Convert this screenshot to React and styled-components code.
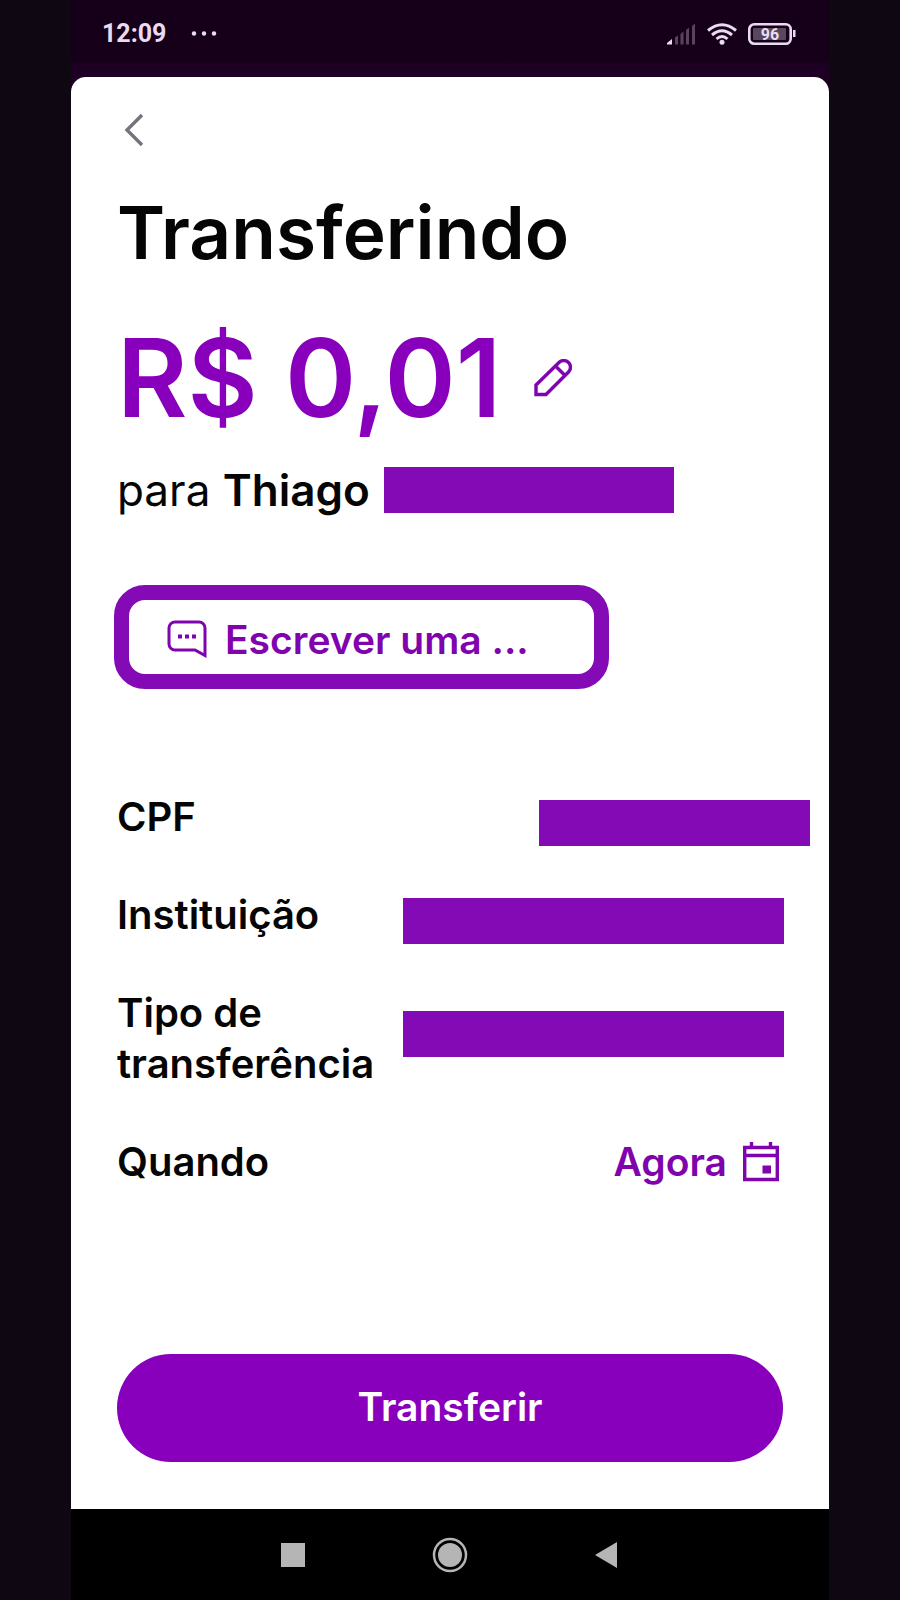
import React from 'react'
import styled, { createGlobalStyle } from 'styled-components'

const GlobalStyle = createGlobalStyle`
  * {
    box-sizing: border-box;
  }
  body {
    margin: 0;
    background: #0f0712;
    font-family: Inter, "Liberation Sans", sans-serif;
  }
  button {
    font-family: inherit;
    cursor: pointer;
  }
`
const Phone = styled.div`
  max-width: 758px;
  min-height: 100vh;
  margin: 0 auto;
  display: flex;
  flex-direction: column;
  background: linear-gradient(#160019 60px, #1e0024 66px);
`
const StatusBar = styled.header`
  height: 77px;
  padding: 0 33px 10px 31px;
  display: flex;
  align-items: center;
  justify-content: space-between;
  color: #eadcf0;
`
const StatusGroup = styled.div`
  display: flex;
  align-items: center;
  gap: ${({ $gap }) => $gap}px;
`
const Clock = styled.time`
  font-family: Roboto, sans-serif;
  font-size: 25px;
  font-weight: 700;
`
const Card = styled.main`
  flex: 1;
  display: flex;
  flex-direction: column;
  align-items: flex-start;
  padding: 32px 46px 47px;
  border-radius: 15px 15px 0 0;
  background: #fff;
  color: #050505;
`
const IconButton = styled.button`
  display: flex;
  padding: 4px;
  border: none;
  background: transparent;
`
const BackButton = styled(IconButton)`
  padding: 4px 7px;
`
const Title = styled.h1`
  margin: 37px 0 0;
  font-size: 73px;
  font-weight: 600;
  line-height: 90px;
`
const AmountRow = styled.div`
  margin-top: 40px;
  display: flex;
  align-items: center;
  gap: 28px;
`
const Amount = styled.span`
  font-size: 108px;
  font-weight: 600;
  line-height: 120px;
  color: #8800bb;
`
const Recipient = styled.div`
  margin-top: 25px;
  display: flex;
  align-items: center;
  gap: 14px;
  font-size: 44px;
  line-height: 54px;
`
const Name = styled.strong`
  font-weight: 600;
`
const Redacted = styled.span`
  display: block;
  width: ${({ $width }) => $width}px;
  height: 46px;
  background: #830ab4;
`
const MessageButton = styled.button`
  width: 495px;
  height: 104px;
  margin: 68px 0 0 -3px;
  padding: 4px 38px 0;
  display: flex;
  align-items: center;
  gap: 18px;
  border: 15px solid #830ab4;
  border-radius: 31px;
  background: #fff;
  color: #8004ae;
  font-size: 39px;
  font-weight: 600;
`
const Details = styled.dl`
  width: 100%;
  margin: 102px 0 0;
  display: flex;
  flex-direction: column;
  gap: 43px;
  font-size: 40px;
  font-weight: 600;
  line-height: 51px;
`
const DetailRow = styled.div`
  display: grid;
  grid-template-columns: 262px 1fr;
  column-gap: 24px;
`
const Label = styled.dt`
  padding-bottom: 4px;
`
const Value = styled.dd`
  margin: 0 ${({ $bleed }) => ($bleed ? '-27px' : '0')} 0 0;
  padding-top: ${({ $tall }) => ($tall ? 24 : 9)}px;
  display: flex;
  justify-content: flex-end;
`
const When = styled.dd`
  margin: 0;
  display: flex;
  align-items: flex-start;
  justify-content: flex-end;
`
const DateButton = styled.button`
  padding: 0 4px 0 0;
  display: flex;
  align-items: center;
  gap: 16px;
  border: none;
  background: transparent;
  color: #8004ae;
  font-size: 39px;
  font-weight: 600;
  line-height: 51px;
`
const TransferButton = styled.button`
  width: 100%;
  height: 108px;
  margin-top: auto;
  padding: 0 0 4px;
  border: none;
  border-radius: 54px;
  background: #8800bb;
  color: #fff;
  font-size: 39px;
  font-weight: 600;
`
const NavBar = styled.nav`
  height: 91px;
  padding: 0 206px;
  display: flex;
  align-items: center;
  justify-content: space-between;
  background: #000;
`

const SignalIcon = () => (
  <svg width="29" height="22" viewBox="0 0 29 22" aria-hidden="true">
    <path d="M0 21.500V20L5 16v5.500z" fill="#eadcf0" />
    <g fill="#59435f">
      <path d="M8 14.500l3-2v9H8zM13.500 11l3-2.500v13h-3zM19 7l3-2.500v17h-3zM25 3l3-2.500v21h-3z" />
    </g>
  </svg>
)

const WifiIcon = () => (
  <svg width="30" height="22" viewBox="0 0 30 22" fill="none" stroke="#eadcf0" strokeWidth="3" aria-hidden="true">
    <path d="M1 7.500Q15-4 29 7.500M5 12Q15 3.500 25 12M9.500 16Q15 11 20.500 16" />
    <circle cx="15" cy="19.300" r="2.500" fill="#eadcf0" stroke="none" />
  </svg>
)

const BatteryIcon = () => (
  <svg width="48" height="22" viewBox="0 0 48 22" aria-label="96">
    <rect x="1.300" y="1.300" width="41.400" height="19.400" rx="5" fill="none" stroke="#eadcf0" strokeWidth="2.600" />
    <rect x="5" y="5" width="33" height="12" rx="1" fill="#58475f" />
    <rect x="45" y="7" width="2.500" height="7" fill="#eadcf0" />
    <text x="22" y="17" textAnchor="middle" fontFamily="Roboto, sans-serif" fontSize="16" fontWeight="700" fill="#eadcf0">96</text>
  </svg>
)

const DotsIcon = () => (
  <svg width="26" height="6" viewBox="0 0 26 6" fill="#eadcf0" aria-hidden="true">
    <circle cx="3" cy="2.500" r="2.200" />
    <circle cx="13" cy="2.500" r="2.200" />
    <circle cx="23" cy="2.500" r="2.200" />
  </svg>
)

const BackIcon = () => (
  <svg width="20" height="34" viewBox="0 0 20 34" fill="none" stroke="#74747c" strokeWidth="3.400" aria-hidden="true">
    <path d="M18 2 3 17l15 15" />
  </svg>
)

const PencilIcon = () => (
  <svg width="38" height="38" viewBox="0 0 38 38" fill="none" stroke="#8004ae" strokeWidth="3.400" aria-hidden="true">
    <path d="M2 26 25 3.500a6.700 6.700 0 0 1 9.500 9.500L12 35.500H2z" />
    <path d="m22 7.500 8.500 8.500" />
  </svg>
)

const MessageIcon = () => (
  <svg width="40" height="38" viewBox="0 0 40 38" fill="none" stroke="#8004ae" strokeWidth="3" aria-hidden="true">
    <path d="M38 35.500V8a6 6 0 0 0-6-6H8a6 6 0 0 0-6 6v16a6 6 0 0 0 6 6h20z" />
    <path d="M11 16.500h4M18 16.500h4M25 16.500h4" strokeWidth="4" />
  </svg>
)

const CalendarIcon = () => (
  <svg width="36" height="40" viewBox="0 0 36 40" fill="none" stroke="#8004ae" strokeWidth="3.400" aria-hidden="true">
    <path d="M1.700 5.500h32.600v32H1.700zM1.700 13.500h32.600" />
    <path d="M8.500 0v5M27.500 0v5" />
    <path d="M19.500 23.500H28v8h-8.500z" fill="#8004ae" stroke="none" />
  </svg>
)

const rows = [
  { label: 'CPF', width: 271, bleed: true },
  { label: 'Instituição', width: 381 },
  { label: 'Tipo de transferência', width: 381, tall: true },
]

const App = () => {
  return (
    <>
      <GlobalStyle />
      <Phone>
        <StatusBar>
          <StatusGroup $gap={25}>
            <Clock>12:09</Clock>
            <DotsIcon />
          </StatusGroup>
          <StatusGroup $gap={11}>
            <SignalIcon />
            <WifiIcon />
            <BatteryIcon />
          </StatusGroup>
        </StatusBar>
        <Card>
          <BackButton aria-label="Voltar"><BackIcon /></BackButton>
          <Title>Transferindo</Title>
          <AmountRow>
            <Amount>R$ 0,01</Amount>
            <IconButton aria-label="Editar valor"><PencilIcon /></IconButton>
          </AmountRow>
          <Recipient>
            <span>para <Name>Thiago</Name></span>
            <Redacted $width={290} />
          </Recipient>
          <MessageButton>
            <MessageIcon />
            Escrever uma ...
          </MessageButton>
          <Details>
            {rows.map((row) => (
              <DetailRow key={row.label}>
                <Label>{row.label}</Label>
                <Value $bleed={row.bleed} $tall={row.tall}>
                  <Redacted $width={row.width} />
                </Value>
              </DetailRow>
            ))}
            <DetailRow>
              <Label>Quando</Label>
              <When>
                <DateButton>
                  Agora
                  <CalendarIcon />
                </DateButton>
              </When>
            </DetailRow>
          </Details>
          <TransferButton>Transferir</TransferButton>
        </Card>
        <NavBar>
          <IconButton aria-label="Recentes">
            <svg width="24" height="24" aria-hidden="true"><rect width="24" height="24" fill="#b5b5b5" /></svg>
          </IconButton>
          <IconButton aria-label="Início">
            <svg width="36" height="36" viewBox="0 0 36 36" aria-hidden="true">
              <circle cx="18" cy="18" r="16" fill="none" stroke="#b5b5b5" strokeWidth="2.500" />
              <circle cx="18" cy="18" r="12" fill="#b5b5b5" />
            </svg>
          </IconButton>
          <IconButton aria-label="Voltar ao anterior">
            <svg width="24" height="26" aria-hidden="true"><path d="M22 0v26L0 13z" fill="#b5b5b5" /></svg>
          </IconButton>
        </NavBar>
      </Phone>
    </>
  )
}

export default App
